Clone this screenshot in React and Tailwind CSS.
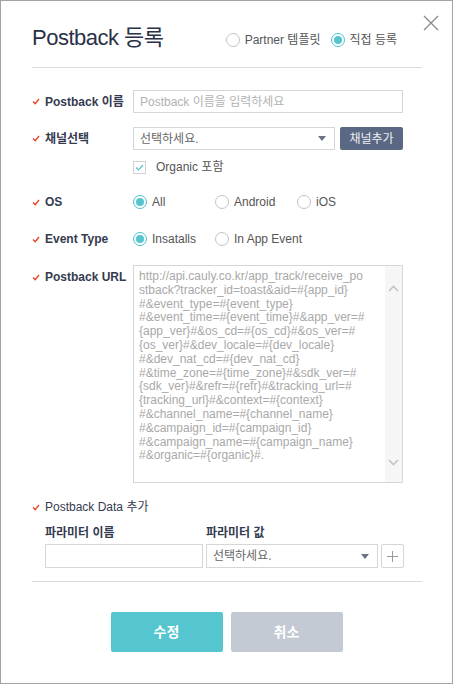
import React from "react";

const FONT = { fontFamily: '"Liberation Sans", "Noto Sans CJK KR", sans-serif' };

const urlLines = [
	"http://api.cauly.co.kr/app_track/receive_po",
	"stback?tracker_id=toast&aid=#{app_id}",
	"#&event_type=#{event_type}",
	"#&event_time=#{event_time}#&app_ver=#",
	"{app_ver}#&os_cd=#{os_cd}#&os_ver=#",
	"{os_ver}#&dev_locale=#{dev_locale}",
	"#&dev_nat_cd=#{dev_nat_cd}",
	"#&time_zone=#{time_zone}#&sdk_ver=#",
	"{sdk_ver}#&refr=#{refr}#&tracking_url=#",
	"{tracking_url}#&context=#{context}",
	"#&channel_name=#{channel_name}",
	"#&campaign_id=#{campaign_id}",
	"#&campaign_name=#{campaign_name}",
	"#&organic=#{organic}#.",
];

const Check = () => (
	<svg width="8" height="7" viewBox="0 0 8 7" className="shrink-0">
		<path d="M1 3.5 L3.2 5.6 L7 1" fill="none" stroke="#e8462b" strokeWidth="1.4" />
	</svg>
);

const Label = ({ children }) => (
	<div className="w-[101px] shrink-0 flex items-center gap-[5px]">
		<Check />
		<span className="text-[12px] font-bold text-[#353b4f] leading-[14px]">{children}</span>
	</div>
);

const Radio = ({ checked, label }) => (
	<div className="flex items-center gap-[5px]">
		<span
			className={
				checked
					? "w-[14px] h-[14px] rounded-full border border-[#4cc1cd] flex items-center justify-center"
					: "w-[14px] h-[14px] rounded-full border border-[#c4c4c4]"
			}
		>
			{checked && <span className="w-[8px] h-[8px] rounded-full bg-[#55c5cf]" />}
		</span>
		<span className="text-[12px] text-[#555] leading-[14px]">{label}</span>
	</div>
);

const Caret = () => (
	<svg width="8" height="5" viewBox="0 0 8 5">
		<path d="M0 0 L8 0 L4 5 Z" fill="#6b7280" />
	</svg>
);

const Select = ({ className }) => (
	<div className={"h-[23px] border border-[#d4d6da] flex items-center pl-[6px] pr-[8px] " + className}>
		<span className="text-[12px] text-[#666]">선택하세요.</span>
		<span className="ml-auto">
			<Caret />
		</span>
	</div>
);

export default function App() {
	return (
		<div style={FONT} className="w-[453px] h-[684px] border border-[#a3a3a3] bg-white relative overflow-hidden">
			<svg className="absolute left-[422px] top-[14px]" width="16" height="16" viewBox="0 0 16 16">
				<path d="M1 1 L15 15 M15 1 L1 15" stroke="#8a8a8a" strokeWidth="1.3" />
			</svg>

			<div className="pl-[31px] pr-[30px]">
				{/* header */}
				<div className="mt-[22px] h-[30px] flex items-center">
					<h1 className="text-[22px] leading-[30px] text-[#2b3148] tracking-[-0.5px]">Postback 등록</h1>
					<div className="ml-auto mr-[25px] mt-[4px] flex items-center gap-[10px]">
						<Radio label="Partner 템플릿" />
						<Radio checked label="직접 등록" />
					</div>
				</div>
				<div className="mt-[14px] h-px bg-[#d7dbe1]" />

				{/* name */}
				<div className="mt-[22px] flex items-center">
					<Label>Postback 이름</Label>
					<div className="w-[270px] h-[23px] border border-[#d4d6da] flex items-center pl-[6px]">
						<span className="text-[12px] text-[#b2b2b2]">Postback 이름을 입력하세요</span>
					</div>
				</div>

				{/* channel */}
				<div className="mt-[14px] flex items-center">
					<Label>채널선택</Label>
					<Select className="w-[202px]" />
					<button className="ml-[5px] w-[63px] h-[23px] rounded-[2px] bg-[#5b6883] text-[12px] text-[#eef0f4]">
						채널추가
					</button>
				</div>

				<div className="mt-[10px] ml-[101px] flex items-center gap-[10px]">
					<span className="w-[13px] h-[13px] border border-[#cfd2d6] flex items-center justify-center">
						<svg width="9" height="7" viewBox="0 0 9 7">
							<path d="M1 3.5 L3.5 6 L8 1" fill="none" stroke="#55c5cf" strokeWidth="1.2" />
						</svg>
					</span>
					<span className="text-[12px] text-[#555] leading-[14px]">Organic 포함</span>
				</div>

				{/* OS */}
				<div className="mt-[21px] flex items-center">
					<Label>OS</Label>
					<div className="w-[82px]">
						<Radio checked label="All" />
					</div>
					<div className="w-[82px]">
						<Radio label="Android" />
					</div>
					<Radio label="iOS" />
				</div>

				{/* Event type */}
				<div className="mt-[23px] flex items-center">
					<Label>Event Type</Label>
					<div className="w-[82px]">
						<Radio checked label="Insatalls" />
					</div>
					<Radio label="In App Event" />
				</div>

				{/* URL */}
				<div className="mt-[19px] flex items-start">
					<div className="pt-[5px]">
						<Label>Postback URL</Label>
					</div>
					<div className="w-[270px] h-[218px] border border-[#d4d6da] flex">
						<div className="flex-1 pl-[5px] pt-[4px] text-[12px] leading-[13.8px] text-[#a9a9a9] whitespace-nowrap">
							{urlLines.map((l) => (
								<div key={l}>{l}</div>
							))}
						</div>
						<div className="w-[17px] bg-[#f6f6f6] flex flex-col items-center justify-between pt-[19px] pb-[16px]">
							<svg width="11" height="7" viewBox="0 0 11 7">
								<path d="M1 6 L5.5 1.5 L10 6" fill="none" stroke="#c3c3c3" strokeWidth="1.6" />
							</svg>
							<svg width="11" height="7" viewBox="0 0 11 7">
								<path d="M1 1 L5.5 5.5 L10 1" fill="none" stroke="#c3c3c3" strokeWidth="1.6" />
							</svg>
						</div>
					</div>
				</div>

				{/* Postback data */}
				<div className="mt-[17px] flex items-center gap-[5px]">
					<Check />
					<span className="text-[12px] text-[#353b4f] leading-[14px]">Postback Data 추가</span>
				</div>
				<div className="mt-[12px] ml-[13px] flex text-[12px] font-bold text-[#353b4f] leading-[14px]">
					<span className="w-[161px]">파라미터 이름</span>
					<span>파라미터 값</span>
				</div>
				<div className="mt-[4px] ml-[13px] flex items-center gap-[3px]">
					<div className="w-[158px] h-[24px] border border-[#d4d6da]" />
					<Select className="w-[172px] h-[24px]" />
					<div className="w-[23px] h-[24px] border border-[#d4d6da] rounded-[2px] flex items-center justify-center">
						<svg width="11" height="11" viewBox="0 0 11 11">
							<path d="M5.5 0 V11 M0 5.5 H11" stroke="#9a9a9a" strokeWidth="1" />
						</svg>
					</div>
				</div>
				<div className="mt-[13px] h-px bg-[#d7dbe1]" />

				{/* buttons */}
				<div className="mt-[30px] flex justify-center gap-[8px] pr-[1px]">
					<button className="w-[112px] h-[40px] rounded-[2px] bg-[#55c5cf] text-white text-[14px] font-bold">
						수정
					</button>
					<button className="w-[112px] h-[40px] rounded-[2px] bg-[#c3cad3] text-white text-[14px] font-bold">
						취소
					</button>
				</div>
			</div>
		</div>
	);
}
